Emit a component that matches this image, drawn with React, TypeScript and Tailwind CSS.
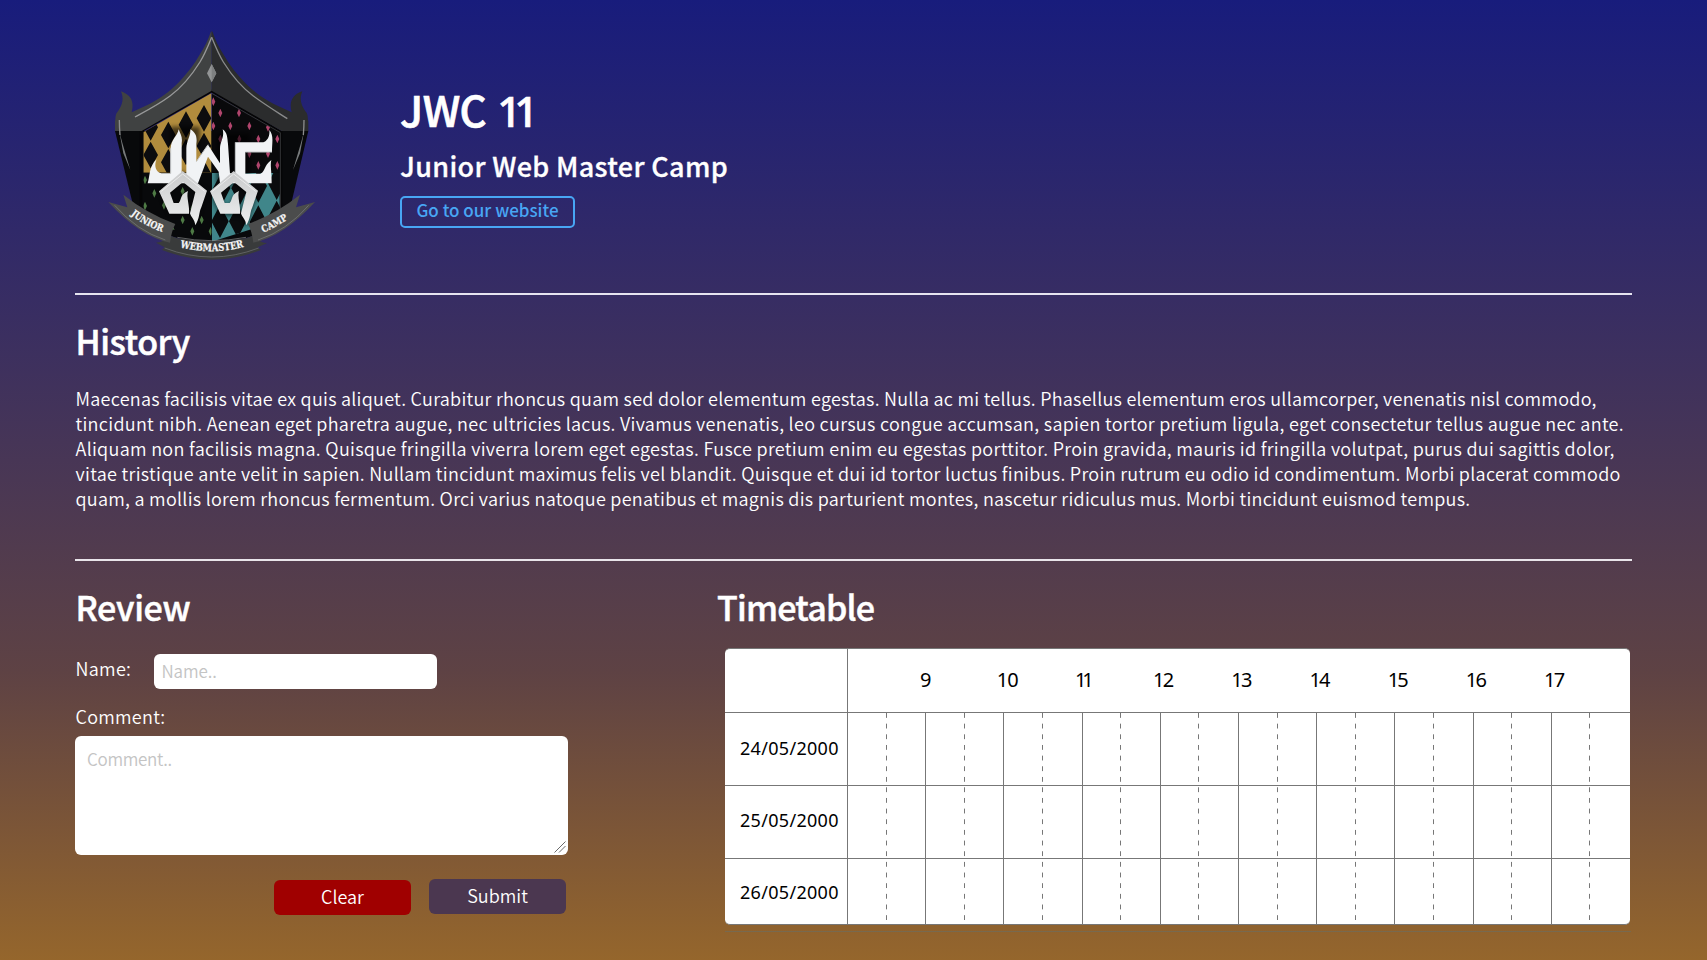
const HOURS = [
  { label: "9", track: "" },
  { label: "10", track: "-ml-[1.5px] mr-[1.5px] tracking-[-0.8px]" },
  { label: "11", track: "-ml-[1.5px] mr-[1.5px] tracking-[-4px]" },
  { label: "12", track: "-ml-[1.5px] mr-[1.5px] tracking-[-1.8px]" },
  { label: "13", track: "-ml-[1.5px] mr-[1.5px] tracking-[-1.8px]" },
  { label: "14", track: "-ml-[1.5px] mr-[1.5px] tracking-[-1.8px]" },
  { label: "15", track: "-ml-[1.5px] mr-[1.5px] tracking-[-1.8px]" },
  { label: "16", track: "-ml-[1.5px] mr-[1.5px] tracking-[-1.8px]" },
  { label: "17", track: "-ml-[1.5px] mr-[1.5px] tracking-[-1.8px]" },
];

const DAYS = [
  { date: "24/05/2000", row: "h-[73px]", text: "pb-[3px]", dash: "bg-[position:0_0px]" },
  { date: "25/05/2000", row: "h-[73px]", text: "pb-[5px]", dash: "bg-[position:0_1.3px]" },
  { date: "26/05/2000", row: "h-[65px]", text: "pt-px", dash: "bg-[position:0_2.9px]" },
];

const HISTORY = [
  {
    track: "tracking-[0.265px]",
    line: "Maecenas facilisis vitae ex quis aliquet. Curabitur rhoncus quam sed dolor elementum egestas. Nulla ac mi tellus. Phasellus elementum eros ullamcorper, venenatis nisl commodo,",
  },
  {
    track: "tracking-[0.307px]",
    line: "tincidunt nibh. Aenean eget pharetra augue, nec ultricies lacus. Vivamus venenatis, leo cursus congue accumsan, sapien tortor pretium ligula, eget consectetur tellus augue nec ante.",
  },
  {
    track: "tracking-[0.305px]",
    line: "Aliquam non facilisis magna. Quisque fringilla viverra lorem eget egestas. Fusce pretium enim eu egestas porttitor. Proin gravida, mauris id fringilla volutpat, purus dui sagittis dolor,",
  },
  {
    track: "tracking-[0.305px]",
    line: "vitae tristique ante velit in sapien. Nullam tincidunt maximus felis vel blandit. Quisque et dui id tortor luctus finibus. Proin rutrum eu odio id condimentum. Morbi placerat commodo",
  },
  {
    track: "tracking-[0.275px]",
    line: "quam, a mollis lorem rhoncus fermentum. Orci varius natoque penatibus et magnis dis parturient montes, nascetur ridiculus mus. Morbi tincidunt euismod tempus.",
  },
];

type Point = [number, number];

const GOLD_GAPS: Point[] = [[342, 295], [288, 314], [235, 345], [342, 378], [288, 396], [235, 427], [182, 405], [182, 322], [342, 461]];
const PINK: Point[] = [[370, 245], [391, 279], [447, 279], [370, 318], [421, 318], [478, 318], [391, 357], [448, 357], [505, 357], [562, 357], [534, 322], [478, 401], [534, 401], [505, 436], [562, 436]];
const GREEN: Point[] = [[165, 480], [193, 520], [222, 478], [165, 558], [193, 597], [222, 556], [278, 514], [250, 565], [278, 600], [307, 566], [250, 635], [307, 634], [335, 600], [362, 634], [335, 520], [222, 635]];
const TEAL_GAPS: Point[] = [[390, 604], [443, 604], [505, 606], [560, 592], [505, 498], [560, 490], [450, 505], [395, 505]];

const diamonds = (pts: Point[], w: number, h: number) =>
  pts.map(([x, y]) => `M${x} ${y - h}L${x + w} ${y}L${x} ${y + h}L${x - w} ${y}Z`).join("");

const ROOF_LEFT =
  "M365 33L362 37C354 60 344 82 328 106C312 134 298 152 278 174C250 206 220 230 180 251Q152 264 125 277C134 244 122 224 93 214C103 238 96 256 84 274C74 284 78 296 75 304V333H155L365 212Z";

const LOOP =
  "M278 453L351 512L334 562C326 578 330 594 316 616C314 598 302 590 300 580L316 516L279 486L240 518L251 549H266C276 540 268 524 294 513C288 530 300 560 297 581H238L207 514Z";

function Crest() {
  return (
    <svg className="h-[250px] w-[240px]" viewBox="0 0 720 750" role="img" aria-label="JWC crest">
      <defs>
        <clipPath id="ul"><path d="M160 337L365 219V458H160Z" /></clipPath>
        <clipPath id="ur"><path d="M365 219L572 337V458H365Z" /></clipPath>
        <clipPath id="ll"><path d="M160 458H365V665L160 600Z" /></clipPath>
        <clipPath id="lr"><path d="M365 458H572V600L365 665Z" /></clipPath>
        <path id="arcLeft" d="M122 584Q168 620 224 638" />
        <path id="arcMid" d="M262 680Q365 708 472 678" />
        <path id="arcRight" d="M520 638Q560 620 604 592" />
        <linearGradient id="loopFill" x1="0" y1="0" x2="0" y2="1">
          <stop offset="0" stopColor="#c9cacb" />
          <stop offset="1" stopColor="#eeeff0" />
        </linearGradient>
        <filter id="soft" x="-10%" y="-10%" width="120%" height="120%">
          <feGaussianBlur stdDeviation="6" />
        </filter>
      </defs>

      <path d="M75 333H655L592 600Q480 668 365 668Q250 668 140 600Z" fill="#08090b" />
      <path d="M88 335L100 400L121 450L98 372Z" fill="#777a7c" />
      <path d="M642 335L630 400L609 450L632 372Z" fill="#777a7c" />

      <g clipPath="url(#ul)">
        <path d="M150 210H365V460H150Z" fill="#b18c3d" />
        <path d={diamonds(GOLD_GAPS, 22, 40)} fill="#0c0c0e" />
      </g>
      <g clipPath="url(#ur)">
        <path d="M365 210H580V460H365Z" fill="#09090b" />
        <path d={diamonds(PINK, 6, 13)} fill="#b0456d" />
      </g>
      <path d={diamonds(GREEN, 6, 13)} fill="#4e7a45" clipPath="url(#ll)" />
      <g clipPath="url(#lr)">
        <path d="M365 458H580V670H365Z" fill="#40868a" />
        <path d={diamonds(TEAL_GAPS, 26, 50)} fill="#0a0b0d" />
      </g>
      <path d="M153 600V333L365 213L573 336V600" fill="none" stroke="#050506" strokeWidth="8" />
      <path d="M571 600V338L365 220" fill="none" stroke="#4b4d50" strokeWidth="2" />

      <path d={ROOF_LEFT} fill="#404242" />
      <path d={ROOF_LEFT} fill="#2b2c2d" transform="matrix(-1 0 0 1 730 0)" />
      <path d="M365 52C352 84 344 104 330 126C300 174 275 202 240 228C205 254 170 272 135 291" fill="none" stroke="#98999a" strokeWidth="4" />
      <path d="M365 52C378 84 386 104 400 126C430 174 455 202 490 228C525 254 558 274 592 296" fill="none" stroke="#8a8b8c" strokeWidth="4" />
      <path d="M88 300Q88 320 90 345M642 300Q642 320 640 345" fill="none" stroke="#8b8c8d" strokeWidth="4" />
      <path d="M365 132L379 160L365 187L351 160Z" fill="#939596" />
      <path d="M365 132L379 160L365 187Z" fill="#7e8081" />

      <g fill="#000" opacity=".6" filter="url(#soft)">
        <path d="M240 320H330V380H240ZM380 340H480V490H380Z" />
        <path d={LOOP} />
        <path d={LOOP} transform="translate(153 6)" />
      </g>

      <g fill="#f1f3f5">
        <path d="M266 328C272 344 278 350 275 370V460H289V385C290 360 302 350 301 328C318 338 322 352 319 372V425L354 374L390 430V385C391 362 404 352 398 328C412 338 412 352 414 372L420 460H436V367H520C532 362 540 350 538 330C552 346 546 366 546 396H466V461H512C528 452 520 438 544 420C540 436 545 450 545 490H390L386 455L354 410L324 490H173C180 470 176 440 200 418C190 440 200 458 215 460H242V385C243 358 262 350 266 328Z" />
      </g>
      <path d="M242 385V460M436 367V460M466 396H546M319 425L354 374" fill="none" stroke="#c6c9cc" strokeWidth="3" />
      <g fill="url(#loopFill)">
        <path d={LOOP} />
        <path d={LOOP} transform="translate(153 0)" />
      </g>
      <g fill="none" stroke="#f8f8f8" strokeWidth="2">
        <path d="M214 514L278 462L344 514" />
        <path d="M367 514L431 462L497 514" />
      </g>

      <path d="M198 668Q222 668 236 646L262 655Q365 672 468 655L492 646Q506 668 531 670L502 682L513 690Q365 748 216 690L224 682Z" fill="#393b3b" />
      <path d="M224 684Q365 738 506 684" fill="none" stroke="#737575" strokeWidth="2" />
      <path d="M262 652Q365 672 468 652" fill="none" stroke="#8a8b8b" strokeWidth="2" />
      <path d="M55 546L112 562L100 524Q170 580 256 612Q244 634 240 668Q150 650 55 546Z" fill="#4b4c4c" />
      <path d="M675 546L618 562L630 524Q560 580 474 612Q486 634 490 668Q580 650 675 546Z" fill="#4b4c4c" />
      <path d="M74 556Q140 632 226 660M656 556Q590 632 504 660" fill="none" stroke="#7d7e7e" strokeWidth="2" />

      <g fill="#f4f4f4" stroke="#f4f4f4" strokeWidth="0.8" className="font-['DejaVu_Serif',serif] text-[29px] font-bold">
        <text><textPath href="#arcLeft" textLength="108" lengthAdjust="spacingAndGlyphs">JUNIOR</textPath></text>
        <text className="text-[31px]"><textPath href="#arcMid" startOffset="8" textLength="194" lengthAdjust="spacingAndGlyphs">WEBMASTER</textPath></text>
        <text><textPath href="#arcRight" textLength="84" lengthAdjust="spacingAndGlyphs">CAMP</textPath></text>
      </g>
    </svg>
  );
}

function Header() {
  return (
    <header className="flex h-[293px] items-start pl-[90px] pt-5">
      <Crest />
      <div className="ml-[70px] flex flex-col items-start pt-[65px]">
        <h1 className="h-12 text-[42px] font-medium leading-[48px] tracking-[-0.4px] [-webkit-text-stroke:0.7px_currentColor]">
          JWC <span className="ml-[2px] font-['Noto_Sans',sans-serif] text-[42px] leading-none tracking-[-7px]">11</span>
        </h1>
        <p className="mt-[17px] text-[27px] font-medium leading-8 tracking-[0.33px] [-webkit-text-stroke:0.3px_currentColor]">
          Junior Web Master Camp
        </p>
        <a
          href="#"
          className="mt-[14px] flex h-8 w-[175px] items-center justify-center rounded-[5px] border-2 border-[#48a6f4] pb-[5px] text-[17px] font-medium leading-none text-[#48a6f4]"
        >
          Go to our website
        </a>
      </div>
    </header>
  );
}

function SectionTitle({ children, className }: { children: string; className: string }) {
  return (
    <h2 className={`text-[34px] font-medium leading-10 [-webkit-text-stroke:0.5px_currentColor] ${className}`}>
      {children}
    </h2>
  );
}

function Review() {
  return (
    <section className="w-[642px]">
      <SectionTitle className="pl-[0.5px] tracking-[-0.35px]">Review</SectionTitle>
      <div className="mt-[26px] flex h-9 items-center">
        <label className="w-[78.5px] pb-[6px] pl-[0.5px] leading-6 tracking-[0.3px]">Name:</label>
        <input
          placeholder="Name.."
          className="h-[35px] w-[283px] rounded-md bg-white px-[8px] pb-[2px] text-[17px] tracking-[-0.1px] text-black placeholder:text-[#c4c4c4]"
        />
      </div>
      <label className="mt-[15px] block pl-[0.5px] leading-6 tracking-[0.25px]">Comment:</label>
      <div className="relative mt-[8px] h-[119px] w-[493px]">
        <textarea
          placeholder="Comment.."
          className="block h-[119px] w-full resize-none rounded-md bg-white px-3 py-[11px] text-[17px] leading-6 tracking-[-0.3px] text-black placeholder:text-[#c4c4c4]"
        />
        <svg className="absolute bottom-[2px] right-[2px] h-3 w-3" viewBox="0 0 12 12" stroke="#6b6b6b" strokeWidth="1">
          <path d="M0.5 11.5L11.5 0.5M5 11.5L11.5 5" />
        </svg>
      </div>
      <div className="mt-[24px] flex w-[491px] items-start justify-end gap-[18px]">
        <button className="mt-px h-[35px] w-[137px] rounded-md bg-[#a00000] pb-[4px] leading-none">Clear</button>
        <button className="h-[35px] w-[137px] rounded-md bg-[#4b3750] pb-[4px] leading-none">Submit</button>
      </div>
    </section>
  );
}

function Timetable() {
  return (
    <section className="w-[915px]">
      <SectionTitle className="tracking-[-0.8px]">Timetable</SectionTitle>
      <div className="ml-[8px] mt-[21px] w-[905px] overflow-hidden rounded-[5px] border-y border-[#777] bg-white font-['Noto_Sans',sans-serif] font-normal text-black">
        <div className="flex h-[64px] border-b border-[#777]">
          <div className="w-[123px] border-r border-[#777]" />
          <div className="flex pl-[72px] pt-[17px] text-xl leading-[28px]">
            {HOURS.map(({ label, track }) => (
              <div key={label} className={`w-[78.2px] ${track}`}>{label}</div>
            ))}
          </div>
        </div>
        {DAYS.map(({ date, row, text, dash }) => (
          <div key={date} className={`flex border-b border-[#777] last:border-b-0 ${row}`}>
            <div className={`flex w-[123px] shrink-0 items-center border-r border-[#777] pl-[15px] ${text}`}>
              <span className="text-[18px] leading-6 tracking-[0.3px]">{date}</span>
            </div>
            {[...HOURS, { label: "18" }].map(({ label }) => (
              <div key={label} className="w-[78.2px] shrink-0 border-r border-[#777] pl-[37.6px] last:border-r-0">
                <div
                  className={`h-full w-px bg-[linear-gradient(#777_5px,transparent_5px)] bg-[length:1px_10.667px] ${dash}`}
                />
              </div>
            ))}
          </div>
        ))}
      </div>
      <div className="ml-[8px] mt-[6px] h-px w-[906px] bg-[#78694f]" />
    </section>
  );
}

export default function App() {
  return (
    <main className="h-[960px] w-[1707px] overflow-hidden bg-[linear-gradient(180deg,#181c7c_0%,#5e4244_70%,#95662c_100%)] font-['Noto_Sans_CJK_JP',sans-serif] text-[18px] text-white">
      <Header />
      <div className="mx-[75px]">
        <hr className="h-0.5 border-0 bg-[#e6e4f0]" />
        <section className="h-[264px] pl-[0.5px] pt-[26px]">
          <SectionTitle className="tracking-[-0.45px]">History</SectionTitle>
          <p className="mt-[25px] whitespace-nowrap font-[350] leading-[25px]">
            {HISTORY.map(({ line, track }) => (
              <span key={line} className={`block ${track}`}>{line}</span>
            ))}
          </p>
        </section>
        <hr className="h-0.5 border-0 bg-[#e8e4ea]" />
        <div className="flex pt-[26px] font-[350]">
          <Review />
          <Timetable />
        </div>
      </div>
    </main>
  );
}
